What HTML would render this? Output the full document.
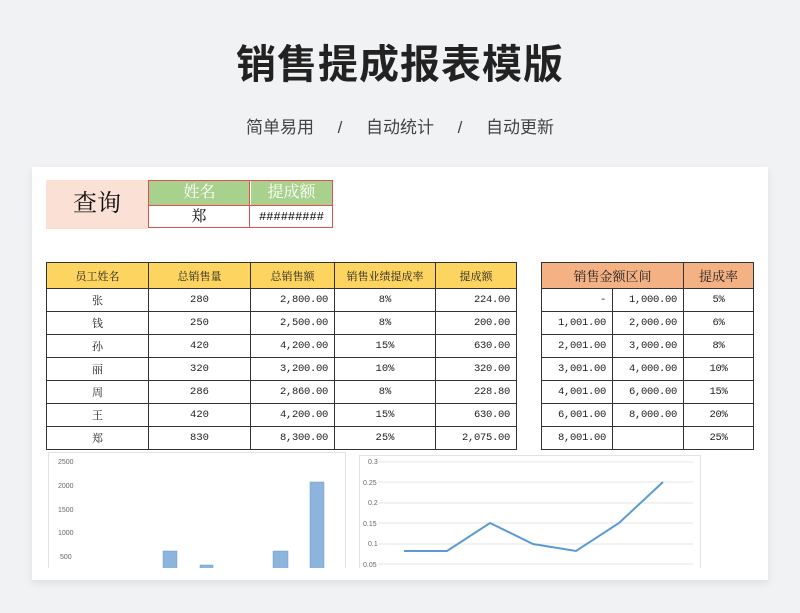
<!DOCTYPE html>
<html><head><meta charset="utf-8"><style>
body{margin:0;width:800px;height:613px;background:#f1f2f4;font-family:"Liberation Sans","Noto Sans CJK SC",sans-serif;position:relative;overflow:hidden}
.a{position:absolute}
h1{position:absolute;left:0;width:800px;top:32px;margin:0;text-align:center;font-size:40px;font-weight:bold;color:#222;letter-spacing:1px}
.sub{position:absolute;left:0;width:800px;top:113px;text-align:center;font-size:17px;color:#444}
.card{position:absolute;left:32px;top:167px;width:736px;height:413px;background:#fff;box-shadow:0 3px 8px rgba(0,0,0,.08);overflow:hidden}
table{border-collapse:collapse;position:absolute;font-family:"Liberation Serif","Noto Serif CJK SC",serif;font-size:11px;color:#222}
td{border:1px solid #333;text-align:center;padding:0;height:22px}
.r{text-align:right;padding-right:6px;font-family:"Liberation Mono",monospace;font-size:10.5px;letter-spacing:-0.3px}
.n td{font-family:"Liberation Mono","Noto Serif CJK SC",monospace;font-size:10.5px}
.n td:first-child{font-family:"Liberation Serif","Noto Serif CJK SC",serif;font-size:11px}
.ser{font-family:"Liberation Serif","Noto Serif CJK SC",serif}
</style></head><body>
<h1>销售提成报表模版</h1>
<div class="sub">简单易用&nbsp;&nbsp;&nbsp;&nbsp;&nbsp;/&nbsp;&nbsp;&nbsp;&nbsp;&nbsp;自动统计&nbsp;&nbsp;&nbsp;&nbsp;&nbsp;/&nbsp;&nbsp;&nbsp;&nbsp;&nbsp;自动更新</div>
<div class="card">
<div class="a ser" style="left:14px;top:13px;width:102px;height:49px;background:#fbe0d6;font-size:24px;line-height:49px;text-align:center;color:#111">查询</div>
<div class="a ser" style="left:116px;top:13px;width:185px;height:48px;border:1px solid #e05050;box-sizing:border-box"></div>
<div class="a ser" style="left:117px;top:14px;width:101px;height:24px;background:#a9d18e;color:#fff;font-size:16px;line-height:24px;text-align:center">姓名</div>
<div class="a ser" style="left:219px;top:14px;width:81px;height:24px;background:#a9d18e;color:#fff;font-size:16px;line-height:24px;text-align:center">提成额</div>
<div class="a" style="left:217px;top:14px;width:1px;height:46px;background:#e05050"></div>
<div class="a" style="left:117px;top:38px;width:183px;height:1px;background:#e05050"></div>
<div class="a ser" style="left:117px;top:39px;width:100px;height:22px;font-size:15px;line-height:22px;text-align:center">郑</div>
<div class="a" style="left:219px;top:39px;width:81px;height:22px;font-size:12px;line-height:22px;text-align:center;font-family:'Liberation Mono',monospace">#########</div>

<table style="left:14px;top:95px;width:471px">
<tr style="background:#fcd45f"><td style="width:101px;height:25px">员工姓名</td><td style="width:101px">总销售量</td><td style="width:83px">总销售额</td><td style="width:100px">销售业绩提成率</td><td>提成额</td></tr>
<tr class="n"><td>张</td><td>280</td><td class="r">2,800.00</td><td>8%</td><td class="r">224.00</td></tr>
<tr class="n"><td>钱</td><td>250</td><td class="r">2,500.00</td><td>8%</td><td class="r">200.00</td></tr>
<tr class="n"><td>孙</td><td>420</td><td class="r">4,200.00</td><td>15%</td><td class="r">630.00</td></tr>
<tr class="n"><td>丽</td><td>320</td><td class="r">3,200.00</td><td>10%</td><td class="r">320.00</td></tr>
<tr class="n"><td>周</td><td>286</td><td class="r">2,860.00</td><td>8%</td><td class="r">228.80</td></tr>
<tr class="n"><td>王</td><td>420</td><td class="r">4,200.00</td><td>15%</td><td class="r">630.00</td></tr>
<tr class="n"><td>郑</td><td>830</td><td class="r">8,300.00</td><td>25%</td><td class="r">2,075.00</td></tr>
</table>

<table style="left:509px;top:95px;width:213px">
<tr style="background:#f4b183;font-size:13px"><td colspan="2" style="height:25px">销售金额区间</td><td>提成率</td></tr>
<tr><td class="r" style="width:64px">-</td><td class="r" style="width:64px">1,000.00</td><td class="r" style="text-align:center;padding:0">5%</td></tr>
<tr><td class="r">1,001.00</td><td class="r">2,000.00</td><td class="r" style="text-align:center;padding:0">6%</td></tr>
<tr><td class="r">2,001.00</td><td class="r">3,000.00</td><td class="r" style="text-align:center;padding:0">8%</td></tr>
<tr><td class="r">3,001.00</td><td class="r">4,000.00</td><td class="r" style="text-align:center;padding:0">10%</td></tr>
<tr><td class="r">4,001.00</td><td class="r">6,000.00</td><td class="r" style="text-align:center;padding:0">15%</td></tr>
<tr><td class="r">6,001.00</td><td class="r">8,000.00</td><td class="r" style="text-align:center;padding:0">20%</td></tr>
<tr><td class="r">8,001.00</td><td class="r"></td><td class="r" style="text-align:center;padding:0">25%</td></tr>
</table>

<svg class="a" style="left:0;top:0" width="736" height="401" font-family="Liberation Sans" font-size="7" fill="#666">
<rect x="16.5" y="285.5" width="297" height="130" fill="none" stroke="#e2e2e2"/>
<text x="26" y="297">2500</text><text x="26" y="321">2000</text><text x="26" y="345">1500</text><text x="26" y="368">1000</text><text x="28" y="392">500</text>
<g fill="#8db4dc" stroke="#6d9ccc" stroke-width=".5"><rect x="131" y="384" width="14" height="20"/><rect x="168" y="398" width="13" height="6"/><rect x="241" y="384" width="15" height="20"/><rect x="278" y="315" width="14" height="90"/></g>
<rect x="327.5" y="288.5" width="341" height="130" fill="none" stroke="#e2e2e2"/>
<g stroke="#e6e6e6"><line x1="346" x2="661" y1="295" y2="295"/><line x1="346" x2="661" y1="315" y2="315"/><line x1="346" x2="661" y1="336" y2="336"/><line x1="346" x2="661" y1="356" y2="356"/><line x1="346" x2="661" y1="377" y2="377"/><line x1="346" x2="661" y1="397" y2="397"/></g>
<text x="336" y="297">0.3</text><text x="331" y="318">0.25</text><text x="336" y="338">0.2</text><text x="331" y="359">0.15</text><text x="336" y="379">0.1</text><text x="331" y="400">0.05</text>
<polyline points="372,384 415,384 458,356 501,377 544,384 587,356 631,315" fill="none" stroke="#5b9bd5" stroke-width="2"/>
</svg>
</div>
</body></html>
